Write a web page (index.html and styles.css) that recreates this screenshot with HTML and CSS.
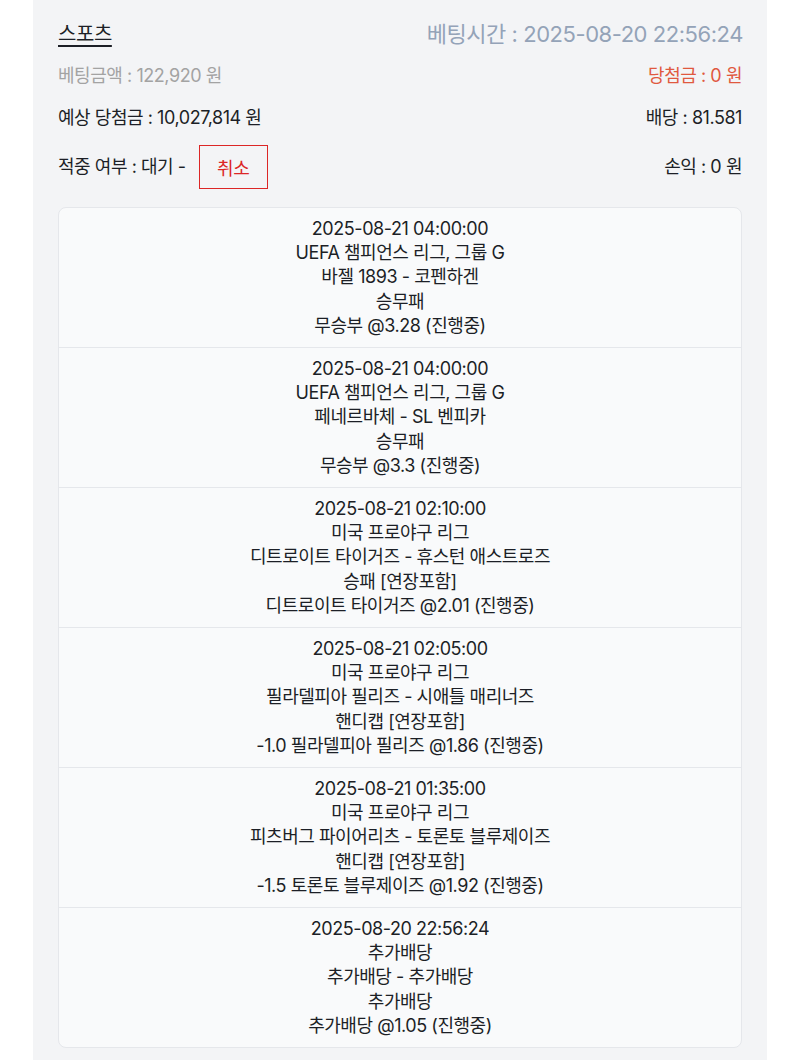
FILE: index.html
```html
<!DOCTYPE html>
<html lang="ko">
<head>
<meta charset="utf-8">
<link rel="stylesheet" href="styles.css">
</head>
<body>
<div class="panel">
  <div class="row row-head">
    <span class="sport">스포츠</span>
    <span class="bettime">베팅시간 : 2025-08-20 22:56:24</span>
  </div>
  <div class="row row-amount">
    <span class="muted">베팅금액 : 122,920 원</span>
    <span class="win">당첨금 : 0 원</span>
  </div>
  <div class="row row-expect">
    <span>예상 당첨금 : 10,027,814 원</span>
    <span>배당 : 81.581</span>
  </div>
  <div class="row row-status">
    <span class="status">적중 여부 : 대기 - <button class="cancel">취소</button></span>
    <span>손익 : 0 원</span>
  </div>
  <div class="card">
    <div class="item">
      <div>2025-08-21 04:00:00</div>
      <div>UEFA 챔피언스 리그, 그룹 G</div>
      <div>바젤 1893 - 코펜하겐</div>
      <div>승무패</div>
      <div>무승부 @3.28 (진행중)</div>
    </div>
    <div class="item">
      <div>2025-08-21 04:00:00</div>
      <div>UEFA 챔피언스 리그, 그룹 G</div>
      <div>페네르바체 - SL 벤피카</div>
      <div>승무패</div>
      <div>무승부 @3.3 (진행중)</div>
    </div>
    <div class="item">
      <div>2025-08-21 02:10:00</div>
      <div>미국 프로야구 리그</div>
      <div>디트로이트 타이거즈 - 휴스턴 애스트로즈</div>
      <div>승패 [연장포함]</div>
      <div>디트로이트 타이거즈 @2.01 (진행중)</div>
    </div>
    <div class="item">
      <div>2025-08-21 02:05:00</div>
      <div>미국 프로야구 리그</div>
      <div>필라델피아 필리즈 - 시애틀 매리너즈</div>
      <div>핸디캡 [연장포함]</div>
      <div>-1.0 필라델피아 필리즈 @1.86 (진행중)</div>
    </div>
    <div class="item">
      <div>2025-08-21 01:35:00</div>
      <div>미국 프로야구 리그</div>
      <div>피츠버그 파이어리츠 - 토론토 블루제이즈</div>
      <div>핸디캡 [연장포함]</div>
      <div>-1.5 토론토 블루제이즈 @1.92 (진행중)</div>
    </div>
    <div class="item">
      <div>2025-08-20 22:56:24</div>
      <div>추가배당</div>
      <div>추가배당 - 추가배당</div>
      <div>추가배당</div>
      <div>추가배당 @1.05 (진행중)</div>
    </div>
  </div>
</div>
</body>
</html>
```

FILE: styles.css
```css
html, body {
  margin: 0;
  padding: 0;
  background: #ffffff;
}
body {
  font-family: Inter, "Noto Sans CJK KR", sans-serif;
  color: #1c1f26;
  letter-spacing: -0.45px;
}
.panel {
  margin: 0 33px;
  min-height: 1060px;
  background: #f3f4f6;
  padding: 19px 25px 20px;
  box-sizing: border-box;
}
.row {
  display: flex;
  justify-content: space-between;
  align-items: center;
  font-size: 18px;
  line-height: 26px;
}
.row-head {
  height: 30px;
}
.sport {
  font-size: 20px;
  text-decoration: underline;
  text-underline-offset: 4px;
  text-decoration-thickness: 1.5px;
}
.bettime {
  font-size: 22px;
  color: #94a3b8;
  margin-right: -1px;
}
.row-amount {
  margin-top: 14px;
}
.muted {
  color: #a3a3a3;
}
.win {
  color: #e0593f;
}
.row-expect {
  margin-top: 16px;
}
.row-status {
  margin-top: 14px;
  height: 44px;
}
.status {
  display: flex;
  align-items: center;
}
.cancel {
  margin-left: 13px;
  width: 69px;
  height: 44px;
  border: 1.5px solid #dc2626;
  background: transparent;
  color: #dc2626;
  font-family: inherit;
  font-size: 18px;
  letter-spacing: -0.45px;
  padding: 0;
  cursor: pointer;
}
.card {
  margin-top: 18px;
  background: #f9fafb;
  border: 1px solid #e5e7eb;
  border-radius: 8px;
  overflow: hidden;
}
.item {
  text-align: center;
  font-size: 18px;
  line-height: 24.4px;
  padding: 8.5px 0 8.5px;
  border-top: 1px solid #e5e7eb;
}
.item:first-child {
  border-top: none;
}
```
